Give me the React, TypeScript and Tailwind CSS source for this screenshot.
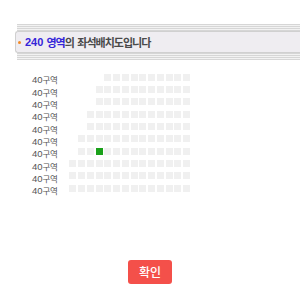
const rows = [10, 11, 11, 12, 12, 13, 13, 14, 14, 14];

function Stripes() {
  return (
    <div className="ml-[17px] flex flex-col">
      <div className="h-px bg-[#d6d6d6]" />
      <div className="h-px bg-[#f2f2f2]" />
      <div className="h-px bg-[#d6d6d6]" />
      <div className="h-px bg-[#f2f2f2]" />
      <div className="h-px bg-[#d6d6d6]" />
      <div className="h-px bg-[#f2f2f2]" />
      <div className="h-px bg-[#d6d6d6]" />
    </div>
  );
}

function SeatRow({ count, row }: { count: number; row: number }) {
  return (
    <div className="ml-[32px] flex h-[12.35px] w-[158px] items-center justify-between">
      <span className="text-[#555] leading-none">
        <span className="text-[9.5px] [font-family:'Liberation_Sans',sans-serif]">40</span>
        <span className="text-[8.5px] tracking-[-0.3px] [font-family:'Noto_Sans_CJK_KR',sans-serif]">구역</span>
      </span>
      <div className="flex gap-[1.75px]">
        {Array.from({ length: count }).map((_, i) => (
          <div
            key={i}
            className={
              row === 6 && i === 2
                ? "h-[7px] w-[7px] bg-[#1aa11a]"
                : "h-[7px] w-[7px] bg-[#f0f0f0]"
            }
          />
        ))}
      </div>
    </div>
  );
}

export default function App() {
  return (
    <div className="flex h-[300px] w-[300px] flex-col bg-white pt-[24px]">
      <Stripes />
      <div className="ml-[15px] flex h-[22px] items-center rounded-l-[3px] border border-r-0 border-[#d0d0d0] bg-[#efedf1] pl-[2px]">
        <div className="h-[3px] w-[3px] rounded-full bg-[#f28a26]" />
        <div className="ml-[4px] flex items-center font-bold leading-none">
          <span className="text-[11px] text-[#3525d8] [font-family:'Liberation_Sans',sans-serif]">240&nbsp;</span>
          <span className="text-[11px] tracking-[-1px] text-[#3525d8] [font-family:'Noto_Sans_CJK_KR',sans-serif]">영역</span>
          <span className="text-[11px] tracking-[-1px] text-[#4a4a4a] [font-family:'Noto_Sans_CJK_KR',sans-serif]">
            의<span className="ml-[2px]"> </span>좌석배치도입니다
          </span>
        </div>
      </div>
      <Stripes />
      <div className="mt-[11px] flex flex-col">
        {rows.map((count, row) => (
          <SeatRow key={row} count={count} row={row} />
        ))}
      </div>
      <div className="mt-auto flex justify-center pb-[16px]">
        <button className="flex h-[24px] w-[44px] items-center justify-center rounded-[3px] bg-[#f4504a] text-[12px] font-medium text-white [font-family:'Noto_Sans_CJK_KR',sans-serif]">
          확인
        </button>
      </div>
    </div>
  );
}
